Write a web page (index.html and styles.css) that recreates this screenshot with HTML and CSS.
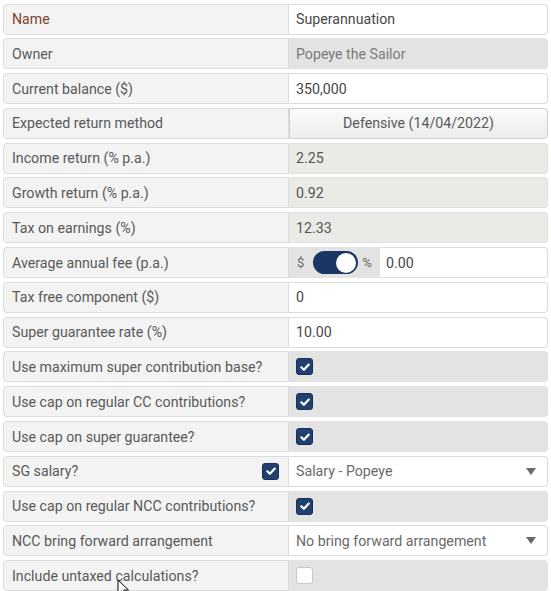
FILE: index.html
```html
<!DOCTYPE html>
<html>
<head>
<meta charset="utf-8">
<link rel="stylesheet" href="styles.css">
</head>
<body>
<div class="form">
  <div class="row"><div class="label label-focus">Name</div><div class="field">Superannuation</div></div>
  <div class="row"><div class="label">Owner</div><div class="field readonly">Popeye the Sailor</div></div>
  <div class="row"><div class="label">Current balance ($)</div><div class="field">350,000</div></div>
  <div class="row"><div class="label">Expected return method</div><div class="field button">Defensive (14/04/2022)</div></div>
  <div class="row"><div class="label">Income return (% p.a.)</div><div class="field calc">2.25</div></div>
  <div class="row"><div class="label">Growth return (% p.a.)</div><div class="field calc">0.92</div></div>
  <div class="row"><div class="label">Tax on earnings (%)</div><div class="field calc">12.33</div></div>
  <div class="row"><div class="label">Average annual fee (p.a.)</div>
    <div class="group">
      <div class="addon"><span class="sym">$</span><span class="toggle"><span class="knob"></span></span><span class="sym">%</span></div>
      <div class="field grow">0.00</div>
    </div>
  </div>
  <div class="row"><div class="label">Tax free component ($)</div><div class="field">0</div></div>
  <div class="row"><div class="label">Super guarantee rate (%)</div><div class="field">10.00</div></div>
  <div class="row"><div class="label">Use maximum super contribution base?</div><div class="field check"><span class="cb on"><svg viewBox="0 0 12 12"><path d="M2.3 6.3 L4.9 8.8 L9.8 3.6" /></svg></span></div></div>
  <div class="row"><div class="label">Use cap on regular CC contributions?</div><div class="field check"><span class="cb on"><svg viewBox="0 0 12 12"><path d="M2.3 6.3 L4.9 8.8 L9.8 3.6" /></svg></span></div></div>
  <div class="row"><div class="label">Use cap on super guarantee?</div><div class="field check"><span class="cb on"><svg viewBox="0 0 12 12"><path d="M2.3 6.3 L4.9 8.8 L9.8 3.6" /></svg></span></div></div>
  <div class="row"><div class="label label-split"><span>SG salary?</span><span class="cb on"><svg viewBox="0 0 12 12"><path d="M2.3 6.3 L4.9 8.8 L9.8 3.6" /></svg></span></div><div class="field select"><span>Salary - Popeye</span><span class="arrow"></span></div></div>
  <div class="row"><div class="label">Use cap on regular NCC contributions?</div><div class="field check"><span class="cb on"><svg viewBox="0 0 12 12"><path d="M2.3 6.3 L4.9 8.8 L9.8 3.6" /></svg></span></div></div>
  <div class="row"><div class="label">NCC bring forward arrangement</div><div class="field select"><span>No bring forward arrangement</span><span class="arrow"></span></div></div>
  <div class="row"><div class="label">Include untaxed calculations?</div><div class="field check"><span class="cb off"></span></div></div>
</div>
<svg class="cursor" width="14" height="20" viewBox="0 0 14 20"><path d="M1 1 L1 15 L4.5 11.8 L7 17.5 L9.2 16.5 L6.8 11 L11.5 11 Z" fill="#fff" stroke="#000" stroke-width="1"/></svg>
</body>
</html>
```
FILE: styles.css
```css
html, body {
  margin: 0;
  padding: 0;
  background: #ffffff;
}
body {
  font-family: Roboto, "Liberation Sans", Arial, sans-serif;
  font-size: 14.2px;
  color: #555;
  position: relative;
  width: 551px;
  height: 591px;
  overflow: hidden;
}
.form {
  padding: 3.5px 3px 0 3px;
  display: flex;
  flex-direction: column;
  gap: 3.8px;
  width: 545px;
}
.row {
  display: flex;
  height: 31px;
}
.label {
  box-sizing: border-box;
  width: 286px;
  flex: none;
  background: #f3f3f3;
  border: 1px solid #dcdcdc;
  border-radius: 4px 0 0 4px;
  padding-left: 8px;
  display: flex;
  align-items: center;
  color: #595959;
}
.label-focus {
  color: #7b4330;
}
.label-split {
  justify-content: space-between;
  padding-right: 9px;
}
.field {
  box-sizing: border-box;
  flex: 1;
  background: #fff;
  border: 1px solid #dcdcdc;
  border-left: none;
  border-radius: 0 4px 4px 0;
  padding-left: 7px;
  display: flex;
  align-items: center;
  color: #474747;
}
.readonly {
  background: #e3e3e3;
  border-color: #e3e3e3;
  color: #7a7a7a;
}
.calc {
  background: #eaeae6;
  border-color: #e0e0dc;
  color: #555;
}
.button {
  justify-content: center;
  padding-left: 0;
  background: linear-gradient(#fbfbfb, #ececec);
  border: 1px solid #cfcfcf;
  color: #5a5a5a;
}
.check {
  background: #e3e3e3;
  border-color: #e3e3e3;
}
.select {
  justify-content: space-between;
  padding-right: 11px;
  color: #6a6a6a;
}
.arrow {
  width: 0;
  height: 0;
  border-left: 5px solid transparent;
  border-right: 5px solid transparent;
  border-top: 7px solid #6a6a6a;
}
.group {
  flex: 1;
  display: flex;
}
.addon {
  box-sizing: border-box;
  width: 91px;
  flex: none;
  background: #e3e3e3;
  display: flex;
  align-items: center;
  padding-left: 8px;
  color: #666;
}
.addon .sym {
  font-size: 13px;
}
.toggle {
  position: relative;
  width: 45px;
  height: 23px;
  border-radius: 12px;
  background: #1c3663;
  margin: 0 4px 0 9px;
  box-sizing: border-box;
}
.knob {
  position: absolute;
  right: 2px;
  top: 1.5px;
  width: 20px;
  height: 20px;
  border-radius: 50%;
  background: #fff;
}
.grow {
  padding-left: 6px;
}
.cb {
  box-sizing: border-box;
  width: 17px;
  height: 17px;
  border-radius: 3px;
  display: inline-flex;
  align-items: center;
  justify-content: center;
}
.cb.on {
  background: #21406f;
  border: 1px solid #17305a;
}
.cb.off {
  background: #fff;
  border: 1px solid #c8c8c8;
}
.cb svg {
  width: 12px;
  height: 12px;
}
.cb svg path {
  fill: none;
  stroke: #fff;
  stroke-width: 2.2;
  stroke-linecap: round;
  stroke-linejoin: round;
}
.cursor {
  position: absolute;
  left: 117px;
  top: 579px;
}
```
